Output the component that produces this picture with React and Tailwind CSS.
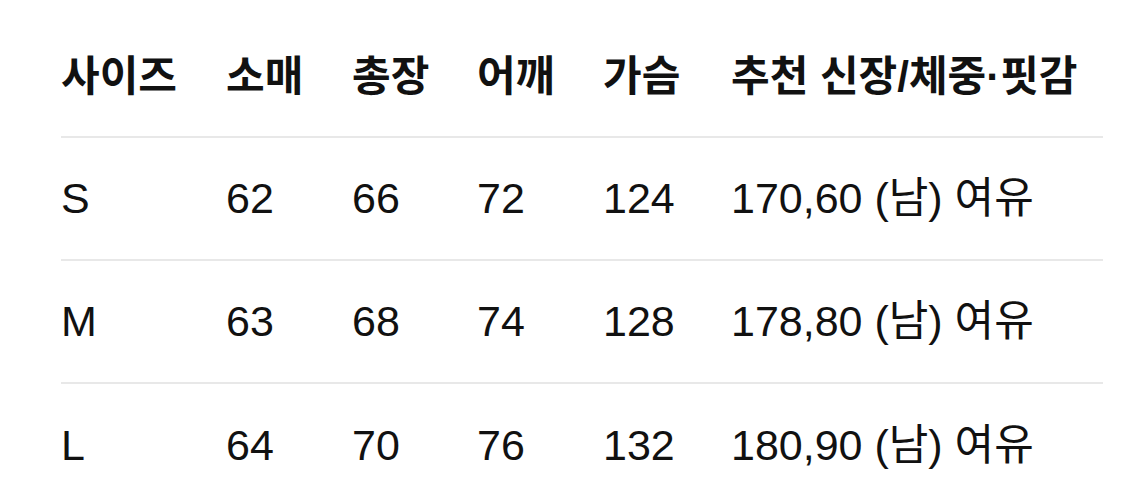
import React from "react";

const headers = ["사이즈", "소매", "총장", "어깨", "가슴", "추천 신장/체중·핏감"];

const rows = [
  ["S", "62", "66", "72", "124", "170,60 (남) 여유"],
  ["M", "63", "68", "74", "128", "178,80 (남) 여유"],
  ["L", "64", "70", "76", "132", "180,90 (남) 여유"],
];

const cols = "grid grid-cols-[165px_126px_125px_126px_128px_1fr] items-center";

const App = () => {
  return (
    <div
      className="w-[1125px] h-[496px] bg-white overflow-hidden pl-[61px] pr-[22px] pt-[16px] text-[#111]"
      style={{ fontFamily: '"Liberation Sans", "Noto Sans CJK KR", sans-serif' }}
    >
      <div className={`${cols} h-[122px] border-b-2 border-[#e8e8e8] text-[42px] font-bold`}>
        {headers.map((h) => (
          <div key={h} className="whitespace-nowrap">
            {h}
          </div>
        ))}
      </div>

      {rows.map((row, i) => (
        <div
          key={row[0]}
          className={`${cols} h-[123px] text-[43px] ${
            i < rows.length - 1 ? "border-b-2 border-[#e8e8e8]" : ""
          }`}
        >
          {row.map((cell, j) => (
            <div key={j} className="whitespace-nowrap">
              {cell}
            </div>
          ))}
        </div>
      ))}
    </div>
  );
};

export default App;
